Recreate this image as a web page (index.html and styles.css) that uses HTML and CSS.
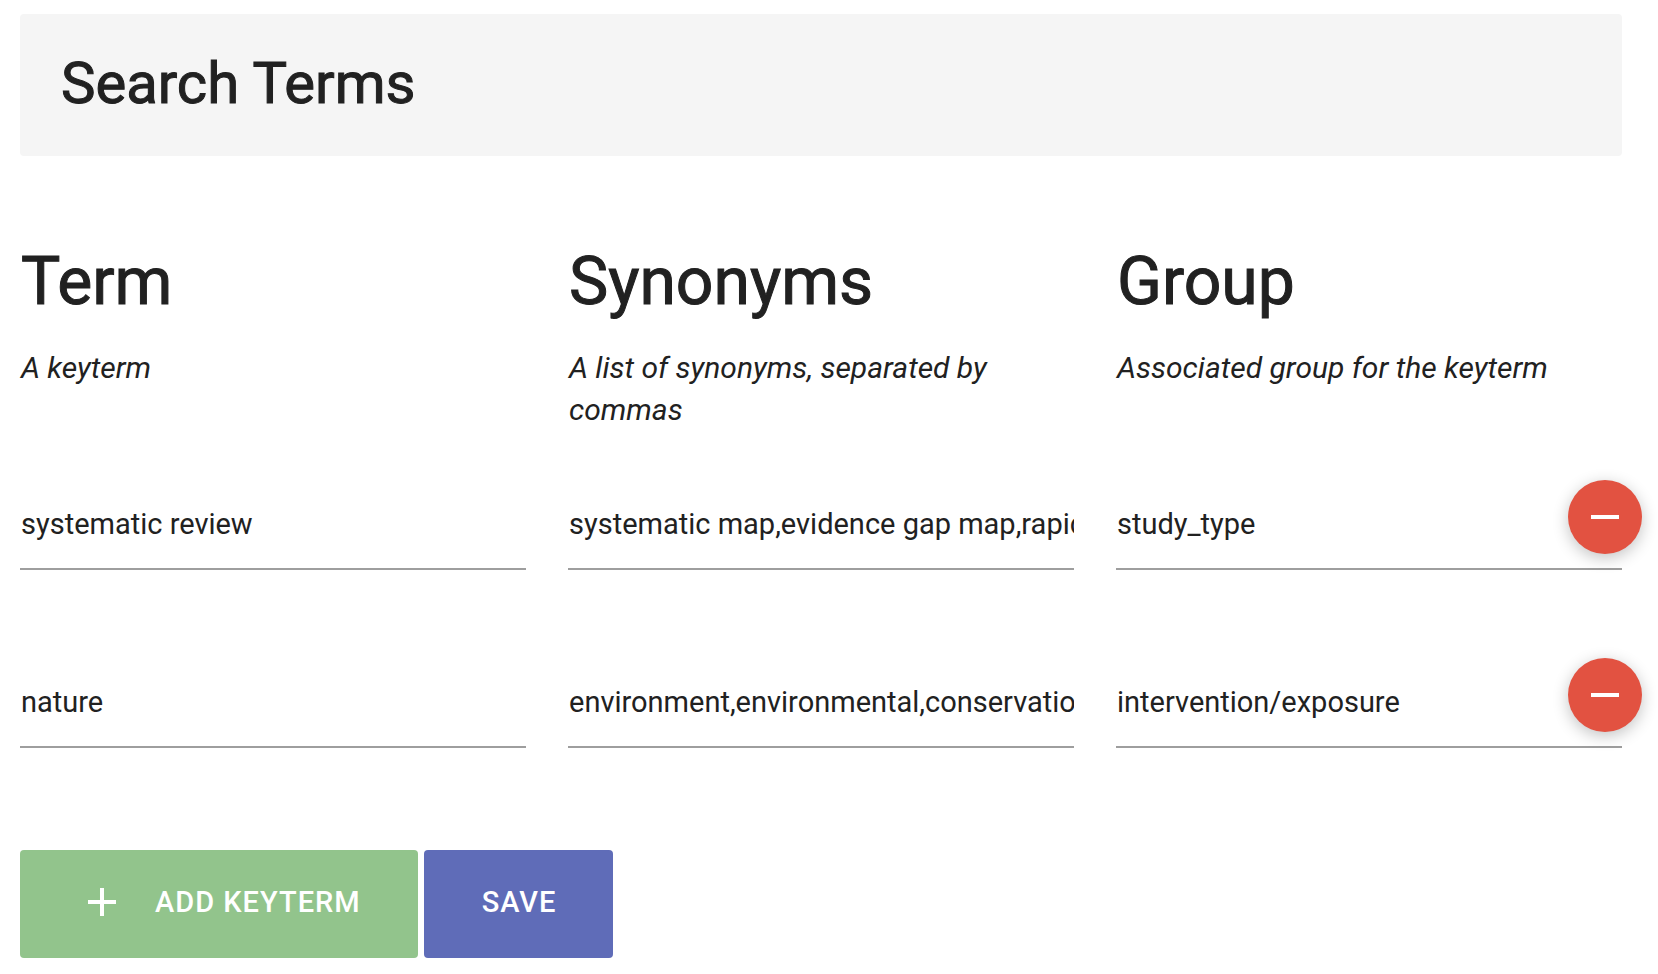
FILE: index.html
```html
<!DOCTYPE html>
<html lang="en">
<head>
<meta charset="utf-8">
<title>Search Terms</title>
<link rel="stylesheet" href="styles.css">
</head>
<body>
<main class="page">
  <header class="banner"><h1 class="banner-title">Search Terms</h1></header>
  <form class="terms">
    <div class="row headings">
      <div class="column-head"><h2 class="heading">Term</h2><p class="hint">A keyterm</p></div>
      <div class="column-head"><h2 class="heading">Synonyms</h2><p class="hint">A list of synonyms, separated by commas</p></div>
      <div class="column-head"><h2 class="heading">Group</h2><p class="hint">Associated group for the keyterm</p></div>
    </div>
    <div class="row entry">
      <input class="field" type="text" aria-label="Term" value="systematic review">
      <input class="field" type="text" aria-label="Synonyms" value="systematic map,evidence gap map,rapid review">
      <input class="field" type="text" aria-label="Group" value="study_type">
      <button class="remove" type="button" aria-label="Remove keyterm"><svg class="icon" viewBox="0 0 24 24"><path d="M19 13H5v-2h14v2z"/></svg></button>
    </div>
    <div class="row entry">
      <input class="field" type="text" aria-label="Term" value="nature">
      <input class="field" type="text" aria-label="Synonyms" value="environment,environmental,conservation">
      <input class="field" type="text" aria-label="Group" value="intervention/exposure">
      <button class="remove" type="button" aria-label="Remove keyterm"><svg class="icon" viewBox="0 0 24 24"><path d="M19 13H5v-2h14v2z"/></svg></button>
    </div>
    <div class="actions">
      <button class="btn add" type="button"><svg class="icon" viewBox="0 0 24 24"><path d="M19 13h-6v6h-2v-6H5v-2h6V5h2v6h6v2z"/></svg>Add keyterm</button>
      <button class="btn save" type="submit">Save</button>
    </div>
  </form>
</main>
</body>
</html>
```
FILE: styles.css
```css
* { box-sizing: border-box; }
body {
  margin: 0;
  background: #fff;
  color: #212121;
  font-family: Roboto, sans-serif;
}
h1, h2, p { margin: 0; font-weight: 400; }
.page { padding: 14px 36px 16px 20px; }
.banner {
  padding: 34px 41px 38px;
  background: #f5f5f5;
  border-radius: 4px;
}
.banner-title {
  font-size: 58px;
  line-height: 70px;
  -webkit-text-stroke: 1px currentColor;
}
.row {
  display: grid;
  grid-template-columns: repeat(3, minmax(0, 1fr));
  column-gap: 42px;
}
.headings { padding-top: 86px; }
.column-head { padding-left: 1px; }
.heading {
  font-size: 66px;
  line-height: 80px;
  -webkit-text-stroke: 1px currentColor;
}
.hint {
  margin-top: 25px;
  font-size: 30px;
  line-height: 42px;
  font-style: italic;
}
.entry { position: relative; margin-top: 49px; }
.field {
  width: 100%;
  height: 90px;
  padding: 0 0 0 1px;
  border: 0;
  border-bottom: 2px solid #9e9e9e;
  border-radius: 0;
  outline: 0;
  background: transparent;
  color: inherit;
  font: 400 29px Roboto, sans-serif;
}
.entry + .entry { margin-top: 88px; }
.remove {
  position: absolute;
  right: -20px;
  top: 0;
  display: flex;
  align-items: center;
  justify-content: center;
  width: 74px;
  height: 74px;
  padding: 0;
  border: 0;
  border-radius: 50%;
  background: #e25241;
  box-shadow: 0 4px 16px rgba(0, 0, 0, 0.24);
}
.icon { width: 48px; height: 48px; fill: #fff; }
.actions { display: flex; gap: 6px; margin-top: 102px; }
.btn {
  display: flex;
  align-items: center;
  height: 108px;
  padding: 0 57px 4px 58px;
  border: 0;
  border-radius: 4px;
  color: #fff;
  font: 500 29px Roboto, sans-serif;
  letter-spacing: 1px;
  text-transform: uppercase;
}
.add { gap: 29px; background: #92c48c; }
.save { background: #5f6cb8; }
```
